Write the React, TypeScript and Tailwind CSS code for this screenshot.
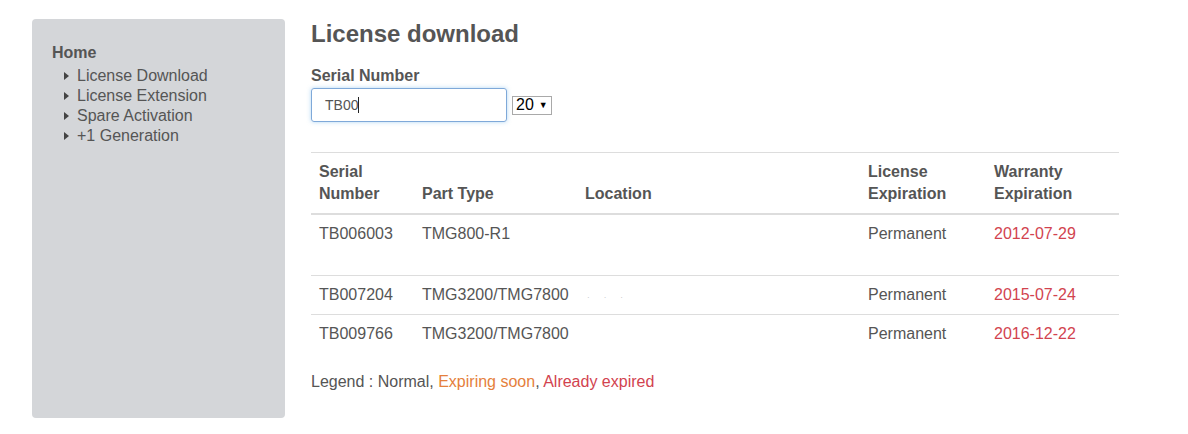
import React from "react"

const navItems = ["License Download", "License Extension", "Spare Activation", "+1 Generation"]

const rows = [
  { serial: "TB006003", part: "TMG800-R1", location: "", license: "Permanent", warranty: "2012-07-29", tall: true },
  { serial: "TB007204", part: "TMG3200/TMG7800", location: "dots", license: "Permanent", warranty: "2015-07-24", tall: false },
  { serial: "TB009766", part: "TMG3200/TMG7800", location: "", license: "Permanent", warranty: "2016-12-22", tall: false },
]

function Caret() {
  return (
    <svg width="5" height="8" viewBox="0 0 5 8" className="mr-[8px] shrink-0">
      <path d="M0 0 L5 4 L0 8 Z" fill="#444" />
    </svg>
  )
}

export default function App() {
  return (
    <div className="w-[1188px] h-[434px] bg-white font-['Liberation_Sans',Arial,sans-serif] text-[#555] flex gap-[26px] pl-[32px] pt-[19px]">
      {/* Sidebar */}
      <aside className="w-[253px] h-[399px] bg-[#d4d6d9] rounded-[4px] pl-[20px] pt-[23px] shrink-0">
        <div className="text-[16px] leading-[22px] font-bold">Home</div>
        <ul className="mt-[2px] pl-[12px]">
          {navItems.map((item) => (
            <li key={item} className="flex items-center text-[16px] leading-[20px]">
              <Caret />
              {item}
            </li>
          ))}
        </ul>
      </aside>

      {/* Main */}
      <main className="w-[808px]">
        <h1 className="text-[24px] leading-[30px] font-bold mt-0">License download</h1>

        <label className="block text-[16px] leading-[20px] font-bold mt-[17px]">Serial Number</label>
        <div className="flex items-center gap-[5px] mt-[2px]">
          <div className="w-[196px] h-[34px] border border-[#7fa9d9] rounded-[3px] shadow-[0_0_4px_rgba(102,175,233,0.5)] flex items-center pl-[13px] text-[14px] text-[#555]">
            TB00<span className="w-px h-[16px] bg-[#222]" />
          </div>
          <div className="h-[19px] px-[3px] border border-[#a9a9a9] flex items-center gap-[5px] text-[16px] text-black leading-none">
            20
            <span className="text-[9px]">▼</span>
          </div>
        </div>

        <table className="w-[808px] mt-[30px] border-t border-[#ddd] border-collapse text-[16px] leading-[22px]">
          <colgroup>
            <col className="w-[103px]" />
            <col className="w-[163px]" />
            <col className="w-[283px]" />
            <col className="w-[126px]" />
            <col className="w-[133px]" />
          </colgroup>
          <thead>
            <tr className="border-b-2 border-[#ddd] text-left align-bottom">
              <th className="px-[8px] pt-[8px] pb-[8px] font-bold">Serial<br />Number</th>
              <th className="px-[8px] pt-[8px] pb-[8px] font-bold">Part Type</th>
              <th className="px-[8px] pt-[8px] pb-[8px] font-bold">Location</th>
              <th className="px-[8px] pt-[8px] pb-[8px] font-bold">License<br />Expiration</th>
              <th className="px-[8px] pt-[8px] pb-[8px] font-bold">Warranty<br />Expiration</th>
            </tr>
          </thead>
          <tbody>
            {rows.map((r, i) => (
              <tr key={r.serial} className={`align-top ${i < rows.length - 1 ? "border-b border-[#ddd]" : ""} ${r.tall ? "h-[61px]" : "h-[39px]"}`}>
                <td className="px-[8px] pt-[8px]">{r.serial}</td>
                <td className="px-[8px] pt-[8px]">{r.part}</td>
                <td className="px-[8px] pt-[8px]">
                  {r.location === "dots" && (
                    <span className="inline-flex gap-[14px] pl-[2px] text-[#bbb] text-[8px]">
                      <span>·</span><span>·</span><span>·</span>
                    </span>
                  )}
                </td>
                <td className="px-[8px] pt-[8px]">{r.license}</td>
                <td className="px-[8px] pt-[8px] text-[#d2434f]">{r.warranty}</td>
              </tr>
            ))}
          </tbody>
        </table>

        <p className="mt-[18px] text-[16px] leading-[22px]">
          Legend : Normal, <span className="text-[#e5803c]">Expiring soon</span>, <span className="text-[#d2434f]">Already expired</span>
        </p>
      </main>
    </div>
  )
}
